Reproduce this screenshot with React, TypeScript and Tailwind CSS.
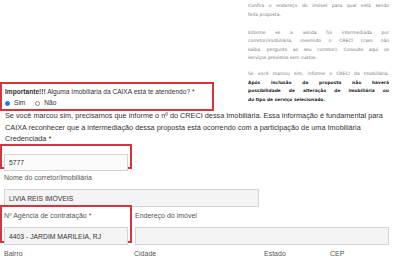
import { useState } from "react";

const inputCls =
  "h-full w-full border border-[#d4d4d4] bg-[#f4f4f4] px-[4px] text-[6.8px] text-[#333] outline-none";

function Field({ label, value, className = "" }: { label: string; value?: string; className?: string }) {
  return (
    <div className={`flex flex-col ${className}`}>
      <label className="h-[12px] text-[7px] leading-[12px] text-[#555]">{label}</label>
      <div className="h-[18px]">
        <input className={inputCls} defaultValue={value} readOnly />
      </div>
    </div>
  );
}

function Line({ text, last = false }: { text: string; last?: boolean }) {
  return (
    <div className={last ? "whitespace-nowrap text-left" : "text-justify [text-align-last:justify]"}>{text}</div>
  );
}

export default function App() {
  const [choice, setChoice] = useState<"sim" | "nao">("sim");

  return (
    <div
      className="h-[262px] w-[400px] overflow-hidden bg-white text-[#333]"
      style={{ fontFamily: '"Liberation Sans", Arial, sans-serif' }}
    >
      {/* top: question box + help panel */}
      <div className="flex items-start">
        <div className="w-[248px] pt-[82px]">
          <div className="h-[29px] w-[214px] border-2 border-[#d8343c] pl-[3px] pt-[3px]">
            <p className="whitespace-nowrap text-[6.6px] leading-[10px] text-[#333]">
              <b>Importante!!!</b> Alguma Imobiliária da CAIXA está te atendendo? *
            </p>
            <div className="mt-[1px] flex items-center gap-[10px] text-[6.6px] leading-[10px] text-[#333]">
              <label className="flex items-center gap-[4px]" onClick={() => setChoice("sim")}>
                <span
                  className={`h-[5px] w-[5px] rounded-full border ${
                    choice === "sim" ? "border-[#1c7fd6] bg-[#1c7fd6]" : "border-[#888] bg-white"
                  }`}
                />
                Sim
              </label>
              <label className="flex items-center gap-[4px]" onClick={() => setChoice("nao")}>
                <span
                  className={`h-[5px] w-[5px] rounded-full border ${
                    choice === "nao" ? "border-[#1c7fd6] bg-[#1c7fd6]" : "border-[#888] bg-white"
                  }`}
                />
                Não
              </label>
            </div>
          </div>
        </div>

        <div
          className="w-[141px] pt-[2px] text-[4.5px] leading-[8.5px] text-[#777]"
          style={{ fontFamily: '"DejaVu Sans", sans-serif' }}
        >
          <Line text="Confira o endereço do imóvel para qual está sendo" />
          <Line text="feita proposta." last />
          <div className="mt-[9.5px]">
            <Line text="Informe se a venda foi intermediada por" />
            <Line text="corretor/imobiliária, inserindo o CRECI (caso não" />
            <Line text="saiba, pergunte ao seu corretor). Consulte aqui os" />
            <Line text="serviços previstos sem custos." last />
          </div>
          <div className="mt-[7.5px]">
            <Line text="Se você marcou sim, informe o CRECI da Imobiliária." />
            <div className="text-[4.4px] font-bold text-[#222]">
              <Line text="Após inclusão da proposta não haverá" />
              <Line text="possibilidade de alteração de imobiliária ou" />
              <Line text="do tipo de serviço selecionado." last />
            </div>
          </div>
        </div>
      </div>

      {/* explanation */}
      <p className="-mt-[1px] px-[5px] text-[7.3px] leading-[11.5px] text-[#333]">
        Se você marcou sim, precisamos que informe o nº do CRECI dessa Imobiliária. Essa informação é fundamental para
        CAIXA reconhecer que a intermediação dessa proposta está ocorrendo com a participação de uma Imobiliária
        Credenciada *
      </p>

      {/* CRECI */}
      <div className="-mt-[1px] h-[25px] w-[132px] border-2 border-[#d8343c] px-[2px] pt-[2px]">
        <div className="h-[17px]">
          <input className={`${inputCls} bg-[#fafafa]`} defaultValue="5777" readOnly />
        </div>
      </div>

      <Field label="Nome do corretor/imobiliária" value="LIVIA REIS IMÓVEIS" className="ml-[4px] mt-[3px] w-[255px]" />

      {/* agência + endereço */}
      <div className="mt-[3px] flex items-start gap-[3px]">
        <div className="h-[38px] w-[132px] border-2 border-[#d8343c] px-[2px] pt-[3px]">
          <Field label="Nº Agência de contratação *" value="4403 - JARDIM MARILEIA, RJ" />
        </div>
        <Field label="Endereço do imóvel" className="mt-[5px] w-[254px]" />
      </div>

      {/* bairro / cidade / estado / cep */}
      <div className="ml-[4px] mt-[5px] grid grid-cols-[124px_124px_60px_60px] gap-x-[6px]">
        <Field label="Bairro" />
        <Field label="Cidade" />
        <Field label="Estado" />
        <Field label="CEP" />
      </div>
    </div>
  );
}
